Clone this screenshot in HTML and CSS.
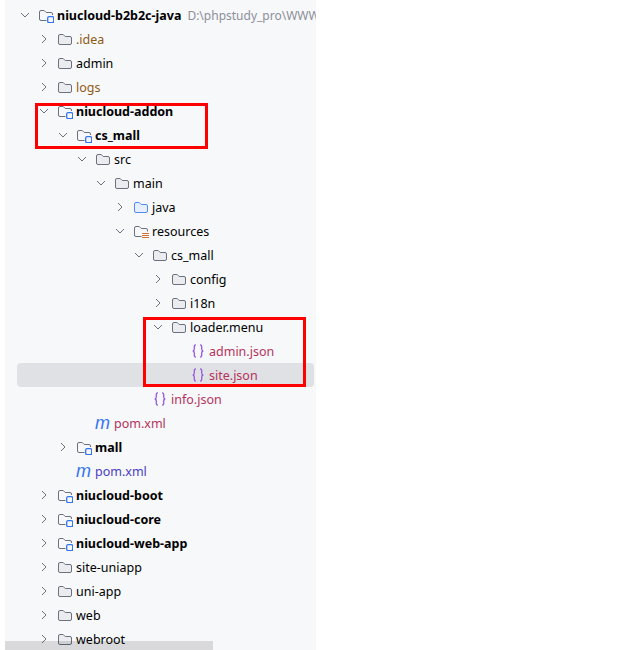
FILE: index.html
```html
<!DOCTYPE html>
<html lang="zh">
<head>
  <meta charset="UTF-8">
  <title>niucloud-b2b2c-java</title>
  <link rel="stylesheet" href="styles.css">
</head>
<body>

<svg class="sprites" width="0" height="0">
  <symbol id="abierto" viewBox="0 0 16 16"><path d="M4 6l4 4 4-4" fill="none" stroke="#6c707e" stroke-width="1"/></symbol>
  <symbol id="cerrado" viewBox="0 0 16 16"><path d="M6 4l4 4-4 4" fill="none" stroke="#6c707e" stroke-width="1"/></symbol>
  <symbol id="carpeta" viewBox="0 0 16 16"><path d="M1.500 5A1.500 1.500 0 0 1 3 3.500h3.200l2 2H13A1.500 1.500 0 0 1 14.500 7v5A1.500 1.500 0 0 1 13 13.500H3A1.500 1.500 0 0 1 1.500 12z" fill="#ebecf0" stroke="#6c707e"/></symbol>
  <symbol id="azul" viewBox="0 0 16 16"><path d="M1.500 5A1.500 1.500 0 0 1 3 3.500h3.200l2 2H13A1.500 1.500 0 0 1 14.500 7v5A1.500 1.500 0 0 1 13 13.500H3A1.500 1.500 0 0 1 1.500 12z" fill="#e7effd" stroke="#548af7"/></symbol>
  <symbol id="modulo" viewBox="0 0 16 16"><path d="M8.500 13.500H3A1.500 1.500 0 0 1 1.500 12V5A1.500 1.500 0 0 1 3 3.500h3.200l2 2H13A1.500 1.500 0 0 1 14.500 7v1" fill="none" stroke="#6c707e"/><rect x="9.700" y="9.700" width="6" height="6" rx="1.400" fill="#f7f8fa" stroke="#3574f0" stroke-width="1.300"/></symbol>
  <symbol id="recursos" viewBox="0 0 16 16"><path d="M8.500 13.500H3A1.500 1.500 0 0 1 1.500 12V5A1.500 1.500 0 0 1 3 3.500h3.200l2 2H13A1.500 1.500 0 0 1 14.500 7v1.500" fill="none" stroke="#6c707e"/><path d="M9 10.500h7M9 12.500h7M9 14.500h7" stroke="#d8703a"/></symbol>
  <symbol id="json" viewBox="0 0 16 16"><path d="M6 1.800C4.800 1.800 4.300 2.400 4.300 3.500v2.500C4.300 7.200 3.800 7.800 2.800 8c1 .2 1.500.8 1.500 2v2.500c0 1.100.5 1.700 1.700 1.700M10 1.800c1.200 0 1.700.6 1.700 1.700v2.500c0 1.200.5 1.800 1.500 2-1 .2-1.500.8-1.500 2v2.500c0 1.100-.5 1.700-1.700 1.700" fill="none" stroke="#955ae0" stroke-width="1.300"/></symbol>
</svg>

<div class="panel">
  <div class="fila n0"><svg class="flecha"><use href="#abierto"/></svg><svg class="icono"><use href="#modulo"/></svg><span class="negrita">niucloud-b2b2c-java</span><span class="ruta">D:\phpstudy_pro\WWW</span></div>
  <div class="fila n1"><svg class="flecha"><use href="#cerrado"/></svg><svg class="icono"><use href="#carpeta"/></svg><span class="ignorado">.idea</span></div>
  <div class="fila n1"><svg class="flecha"><use href="#cerrado"/></svg><svg class="icono"><use href="#carpeta"/></svg><span>admin</span></div>
  <div class="fila n1"><svg class="flecha"><use href="#cerrado"/></svg><svg class="icono"><use href="#carpeta"/></svg><span class="ignorado">logs</span></div>
  <div class="fila n1"><svg class="flecha"><use href="#abierto"/></svg><svg class="icono"><use href="#modulo"/></svg><span class="negrita">niucloud-addon</span></div>
  <div class="fila n2"><svg class="flecha"><use href="#abierto"/></svg><svg class="icono"><use href="#modulo"/></svg><span class="negrita">cs_mall</span></div>
  <div class="fila n3"><svg class="flecha"><use href="#abierto"/></svg><svg class="icono"><use href="#carpeta"/></svg><span>src</span></div>
  <div class="fila n4"><svg class="flecha"><use href="#abierto"/></svg><svg class="icono"><use href="#carpeta"/></svg><span>main</span></div>
  <div class="fila n5"><svg class="flecha"><use href="#cerrado"/></svg><svg class="icono"><use href="#azul"/></svg><span>java</span></div>
  <div class="fila n5"><svg class="flecha"><use href="#abierto"/></svg><svg class="icono"><use href="#recursos"/></svg><span>resources</span></div>
  <div class="fila n6"><svg class="flecha"><use href="#abierto"/></svg><svg class="icono"><use href="#carpeta"/></svg><span>cs_mall</span></div>
  <div class="fila n7"><svg class="flecha"><use href="#cerrado"/></svg><svg class="icono"><use href="#carpeta"/></svg><span>config</span></div>
  <div class="fila n7"><svg class="flecha"><use href="#cerrado"/></svg><svg class="icono"><use href="#carpeta"/></svg><span>i18n</span></div>
  <div class="fila n7"><svg class="flecha"><use href="#abierto"/></svg><svg class="icono"><use href="#carpeta"/></svg><span>loader.menu</span></div>
  <div class="fila n8"><span class="hueco"></span><svg class="icono"><use href="#json"/></svg><span class="nuevo">admin.json</span></div>
  <div class="fila n8 activa"><span class="hueco"></span><svg class="icono"><use href="#json"/></svg><span class="nuevo">site.json</span></div>
  <div class="fila n6"><span class="hueco"></span><svg class="icono"><use href="#json"/></svg><span class="nuevo">info.json</span></div>
  <div class="fila n3"><span class="hueco"></span><span class="maven">m</span><span class="nuevo">pom.xml</span></div>
  <div class="fila n2"><svg class="flecha"><use href="#cerrado"/></svg><svg class="icono"><use href="#modulo"/></svg><span class="negrita">mall</span></div>
  <div class="fila n2"><span class="hueco"></span><span class="maven">m</span><span class="cambiado">pom.xml</span></div>
  <div class="fila n1"><svg class="flecha"><use href="#cerrado"/></svg><svg class="icono"><use href="#modulo"/></svg><span class="negrita">niucloud-boot</span></div>
  <div class="fila n1"><svg class="flecha"><use href="#cerrado"/></svg><svg class="icono"><use href="#modulo"/></svg><span class="negrita">niucloud-core</span></div>
  <div class="fila n1"><svg class="flecha"><use href="#cerrado"/></svg><svg class="icono"><use href="#modulo"/></svg><span class="negrita">niucloud-web-app</span></div>
  <div class="fila n1"><svg class="flecha"><use href="#cerrado"/></svg><svg class="icono"><use href="#carpeta"/></svg><span>site-uniapp</span></div>
  <div class="fila n1"><svg class="flecha"><use href="#cerrado"/></svg><svg class="icono"><use href="#carpeta"/></svg><span>uni-app</span></div>
  <div class="fila n1"><svg class="flecha"><use href="#cerrado"/></svg><svg class="icono"><use href="#carpeta"/></svg><span>web</span></div>
  <div class="fila n1"><svg class="flecha"><use href="#cerrado"/></svg><svg class="icono"><use href="#carpeta"/></svg><span>webroot</span></div>

  <div class="scroll"></div>
  <div class="marca marca-addon"></div>
  <div class="marca marca-menu"></div>
</div>

</body>
</html>
```

FILE: styles.css
```css
html, body {
  margin: 0;
  height: 100%;
  background-color: white;
  overflow: hidden;
}

.sprites {
  position: absolute;
}

.panel {
  position: relative;
  box-sizing: border-box;
  width: 311px;
  height: 650px;
  margin-left: 5px;
  padding-top: 3px;
  background-color: #f7f8fa;
  overflow: hidden;
  font-family: "Noto Sans", sans-serif;
  font-size: 12.5px;
  color: #000;
}

/* filas del arbol */
.fila {
  display: flex;
  align-items: center;
  height: 24px;
  margin: 0 2px 0 12px;
  white-space: nowrap;
}

.activa {
  background-color: #dfe1e5;
  border-radius: 4px;
}

.n0 { padding-left: 0; }
.n1 { padding-left: 19px; }
.n2 { padding-left: 38px; }
.n3 { padding-left: 57px; }
.n4 { padding-left: 76px; }
.n5 { padding-left: 95px; }
.n6 { padding-left: 114px; }
.n7 { padding-left: 133px; }
.n8 { padding-left: 152px; }

.flecha,
.hueco {
  flex: none;
  width: 16px;
  height: 16px;
  margin-right: 5px;
}

.icono {
  flex: none;
  width: 16px;
  height: 16px;
  margin-right: 3px;
}

.maven {
  flex: none;
  width: 19px;
  font-family: "Liberation Sans", sans-serif;
  font-size: 18px;
  font-style: italic;
  line-height: 16px;
  color: #3574f0;
}

.negrita {
  font-weight: bold;
}

.ruta {
  margin-left: 6px;
  font-size: 12px;
  color: #8c8f99;
}

.ignorado { color: #8f5a14; }
.nuevo { color: #b5335a; }
.cambiado { color: #4a3cc0; }

/* marcas rojas encima de la captura */
.marca {
  position: absolute;
  box-sizing: border-box;
  border: 3px solid #f00;
}

.marca-addon {
  left: 30px;
  top: 103px;
  width: 173px;
  height: 46px;
}

.marca-menu {
  left: 138px;
  top: 317px;
  width: 163px;
  height: 70px;
}

.scroll {
  position: absolute;
  left: 0;
  bottom: 0;
  width: 208px;
  height: 9px;
  background-color: rgba(0, 0, 0, 0.12);
}
```
